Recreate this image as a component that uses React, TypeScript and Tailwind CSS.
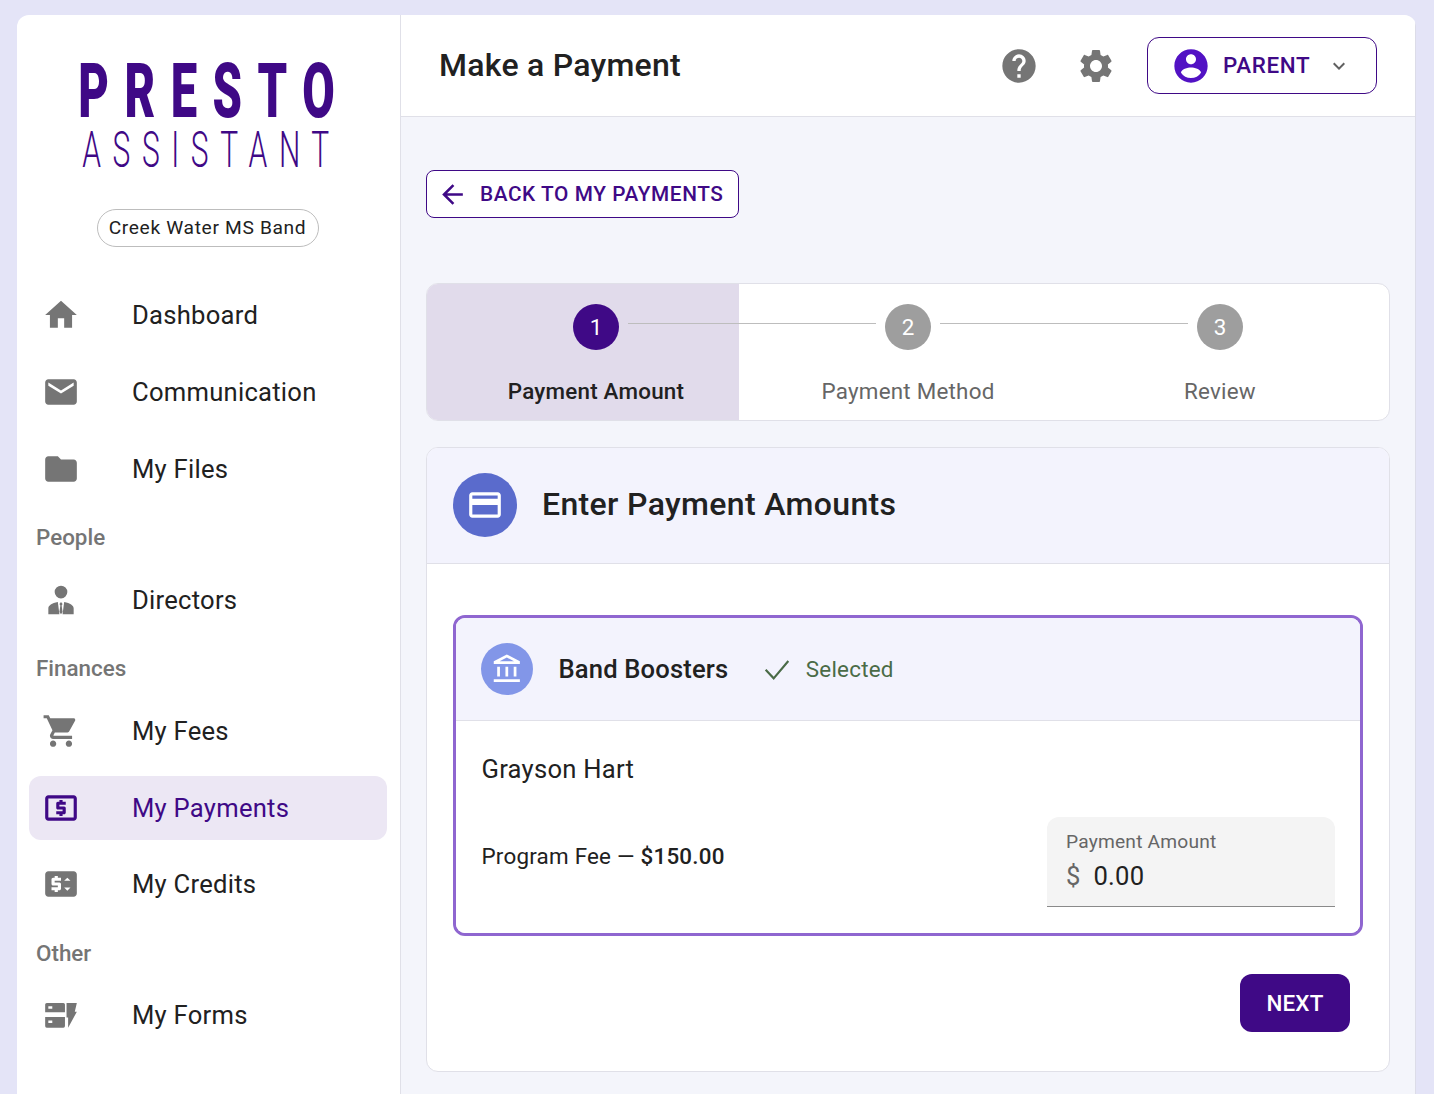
import type { ReactNode } from "react";

const ICONS = {
  home: "M10 20v-6h4v6h5v-8h3L12 3 2 12h3v8z",
  mail: "M20 4H4c-1.1 0-1.99.9-1.99 2L2 18c0 1.1.9 2 2 2h16c1.1 0 2-.9 2-2V6c0-1.1-.9-2-2-2zm0 4l-8 5-8-5V6l8 5 8-5v2z",
  folder: "M10 4H4c-1.1 0-1.99.9-1.99 2L2 18c0 1.1.9 2 2 2h16c1.1 0 2-.9 2-2V8c0-1.1-.9-2-2-2h-8l-2-2z",
  director: "M12 3a4 4 0 110 8 4 4 0 010-8zM4 21v-3.600c0-2 2.200-3.300 6-4.100l1 7.700H4zm16 0v-3.600c0-2-2.200-3.300-6-4.100l-1 7.700h7zM12 13.300l1 1.200-.6 1 .6 4-1 1.500-1-1.500.6-4-.6-1z",
  cart: "M7 18c-1.1 0-1.99.9-1.99 2S5.9 22 7 22s2-.9 2-2-.9-2-2-2zM1 2v2h2l3.6 7.59-1.35 2.45c-.16.28-.25.61-.25.96 0 1.1.9 2 2 2h12v-2H7.42c-.14 0-.25-.11-.25-.25l.03-.12.9-1.63h7.45c.75 0 1.41-.41 1.75-1.03l3.58-6.49c.08-.14.12-.31.12-.48 0-.55-.45-1-1-1H5.21l-.94-2H1zm16 16c-1.1 0-1.99.9-1.99 2s.89 2 1.99 2 2-.9 2-2-.9-2-2-2z",
  atm: "M11 17h2v-1h1c.55 0 1-.45 1-1v-3c0-.55-.45-1-1-1h-3v-1h4V8h-2V7h-2v1h-1c-.55 0-1 .45-1 1v3c0 .55.45 1 1 1h3v1H9v2h2v1zm9-13H4c-1.11 0-1.99.89-1.99 2L2 18c0 1.11.89 2 2 2h16c1.11 0 2-.89 2-2V6c0-1.11-.89-2-2-2zm0 14H4V6h16v12z",
  price: "M20 4H4c-1.11 0-1.99.89-1.99 2L2 18c0 1.11.89 2 2 2h16c1.11 0 2-.89 2-2V6c0-1.11-.89-2-2-2zm-8 6H8v1h3c.55 0 1 .45 1 1v3c0 .55-.45 1-1 1h-1v1H8v-1H6v-2h4v-1H7c-.55 0-1-.45-1-1V9c0-.55.45-1 1-1h1V7h2v1h2v2zm4 6.25l-2-2h4l-2 2zM14 10l2-2 2 2h-4z",
  forms: "M3 4.400h10.500a1 1 0 011 1v4.800H2V5.400a1 1 0 011-1zM4 6.500V8h2.500V6.500H4zM2 13.300h12.500V19a1 1 0 01-1 1H3a1 1 0 01-1-1v-5.700zm2 2.200V17h2.500v-1.500H4zM15.500 4.400H22l-1.300 5.600H22l-5.500 10v-6.500h-1z",
  help: "M12 2C6.48 2 2 6.48 2 12s4.48 10 10 10 10-4.48 10-10S17.52 2 12 2zm1 17h-2v-2h2v2zm2.07-7.75l-.9.92C13.45 12.9 13 13.5 13 15h-2v-.5c0-1.1.45-2.1 1.17-2.83l1.24-1.26c.37-.36.59-.86.59-1.41 0-1.1-.9-2-2-2s-2 .9-2 2H8c0-2.21 1.79-4 4-4s4 1.79 4 4c0 .88-.36 1.68-.93 2.25z",
  settings: "M19.14 12.94c.04-.3.06-.61.06-.94 0-.32-.02-.64-.07-.94l2.03-1.58c.18-.14.23-.41.12-.61l-1.92-3.32c-.12-.22-.37-.29-.59-.22l-2.39.96c-.5-.38-1.03-.7-1.62-.94l-.36-2.54c-.04-.24-.24-.41-.48-.41h-3.84c-.24 0-.43.17-.47.41l-.36 2.54c-.59.24-1.13.57-1.62.94l-2.39-.96c-.22-.08-.47 0-.59.22L2.74 8.87c-.12.21-.08.47.12.61l2.03 1.58c-.05.3-.09.63-.09.94s.02.64.07.94l-2.03 1.58c-.18.14-.23.41-.12.61l1.92 3.32c.12.22.37.29.59.22l2.39-.96c.5.38 1.03.7 1.62.94l.36 2.54c.05.24.24.41.48.41h3.84c.24 0 .44-.17.47-.41l.36-2.54c.59-.24 1.13-.56 1.62-.94l2.39.96c.22.08.47 0 .59-.22l1.92-3.32c.12-.22.07-.47-.12-.61l-2.01-1.58zM12 15.6c-1.98 0-3.6-1.62-3.6-3.6s1.62-3.6 3.6-3.6 3.6 1.62 3.6 3.6-1.62 3.6-3.6 3.6z",
  account: "M12 2C6.48 2 2 6.48 2 12s4.48 10 10 10 10-4.48 10-10S17.52 2 12 2zm0 3c1.66 0 3 1.34 3 3s-1.34 3-3 3-3-1.34-3-3 1.34-3 3-3zm0 14.2c-2.5 0-4.71-1.28-6-3.22.03-1.99 4-3.08 6-3.08 1.99 0 5.97 1.09 6 3.08-1.29 1.94-3.5 3.22-6 3.22z",
  expand: "M16.59 8.59L12 13.17 7.41 8.59 6 10l6 6 6-6z",
  back: "M20 11H7.83l5.59-5.59L12 4l-8 8 8 8 1.41-1.41L7.83 13H20v-2z",
  card: "M20 4H4c-1.11 0-1.99.89-1.99 2L2 18c0 1.11.89 2 2 2h16c1.11 0 2-.89 2-2V6c0-1.11-.89-2-2-2zm0 14H4v-6h16v6zm0-10H4V6h16v2z",
  bank: "M6.500 10h-2v7h2v-7zm6 0h-2v7h2v-7zm8.500 9H2v2h19v-2zm-2.500-9h-2v7h2v-7zm-7-6.740L16.710 6H6.290l5.210-2.740m0-2.260L2 6v2h19V6l-9.500-5z",
};

function Icon({ d, className }: { d: string; className: string }) {
  return (
    <svg viewBox="0 0 24 24" fill="currentColor" className={className} aria-hidden>
      <path d={d} fillRule="evenodd" />
    </svg>
  );
}

function NavItem({ icon, label, active }: { icon: string; label: string; active?: boolean }) {
  return (
    <div
      className={
        "flex h-16 items-center gap-[52px] rounded-xl pl-[13px] " +
        (active ? "bg-[#ece7f4] text-[#3f0986]" : "text-[#212121]")
      }
    >
      <Icon d={icon} className={"h-[38px] w-[38px] shrink-0 " + (active ? "text-[#3f0986]" : "text-[#757575]")} />
      <span className="text-[25.6px] tracking-[0.01em]">{label}</span>
    </div>
  );
}

function NavLabel({ children, className = "mb-[19px] mt-[24px]" }: { children: ReactNode; className?: string }) {
  return (
    <div className={"h-6 pl-[7px] text-[22.4px] font-medium leading-6 text-[#757575] " + className}>
      {children}
    </div>
  );
}

function Logo() {
  return (
    <div className="flex flex-col items-center text-[#3f0986]">
      <div className="flex h-[62px] w-[260px] justify-center">
        <div className="w-max shrink-0 origin-center translate-x-[6px] scale-x-[0.62] whitespace-nowrap text-[76px] font-black leading-[62px] tracking-[25px]">
          PRESTO
        </div>
      </div>
      <div className="mt-[5px] flex h-[46px] w-[260px] justify-center">
        <div className="w-max shrink-0 origin-center translate-x-[3px] scale-x-[0.6] whitespace-nowrap text-[50px] font-light leading-[46px] tracking-[19.300px]">
          ASSISTANT
        </div>
      </div>
    </div>
  );
}

function Sidebar() {
  return (
    <aside className="w-[384px] shrink-0 border-r border-[#e0e0e8] bg-white">
      <div className="pt-[45px]">
        <Logo />
      </div>
      <div className="mt-[36px] flex justify-center">
        <div className="flex h-[38px] w-[222px] translate-x-[-1px] items-center justify-center rounded-full border border-[#bdbdbd] text-[19.2px] tracking-[0.034em] text-[#212121]">
          Creek Water MS Band
        </div>
      </div>
      <nav className="mt-[36px] pl-[12px] pr-[13px]">
        <div className="flex flex-col gap-[13px]">
          <NavItem icon={ICONS.home} label="Dashboard" />
          <NavItem icon={ICONS.mail} label="Communication" />
          <NavItem icon={ICONS.folder} label="My Files" />
        </div>
        <NavLabel>People</NavLabel>
        <NavItem icon={ICONS.director} label="Directors" />
        <NavLabel>Finances</NavLabel>
        <div className="flex flex-col">
          <NavItem icon={ICONS.cart} label="My Fees" />
          <div className="mb-[12px] mt-[13px]">
            <NavItem icon={ICONS.atm} label="My Payments" active />
          </div>
          <NavItem icon={ICONS.price} label="My Credits" />
        </div>
        <NavLabel className="mb-[18px] mt-[25px]">Other</NavLabel>
        <NavItem icon={ICONS.forms} label="My Forms" />
      </nav>
    </aside>
  );
}

function Header() {
  return (
    <header className="flex h-[102px] items-center border-b border-[#e0e0e8] bg-white pl-[38px] pr-[38px]">
      <h1 className="mb-[2px] text-[32px] font-medium tracking-[0.008em] text-[#212121]">Make a Payment</h1>
      <div className="ml-auto flex items-center">
        <Icon d={ICONS.help} className="h-[40px] w-[40px] text-[#757575]" />
        <Icon d={ICONS.settings} className="ml-[37px] h-[40px] w-[40px] text-[#757575]" />
        <button
          type="button"
          className="ml-[31px] flex h-[57px] w-[230px] items-center rounded-xl border border-[#3f0986] pl-[23px] text-[#3f0986]"
        >
          <Icon d={ICONS.account} className="h-[40px] w-[40px] text-[#5212c4]" />
          <span className="ml-[12px] text-[22.4px] font-medium tracking-[0.028em]">PARENT</span>
          <Icon d={ICONS.expand} className="ml-[17px] h-[24px] w-[24px] text-[#616161]" />
        </button>
      </div>
    </header>
  );
}

function Step({ n, label, active, line }: { n: number; label: string; active?: boolean; line?: boolean }) {
  return (
    <div className={"relative flex w-[312px] flex-col items-center pl-[26px] pt-[20px] " + (active ? "bg-[#e1dbeb]" : "")}>
      {line && <div className="absolute left-[201px] top-[39px] h-px w-[248px] bg-[#bdbdbd]" />}
      <div
        className={
          "flex h-[46px] w-[46px] items-center justify-center rounded-full pt-px text-[22.4px] text-white " +
          (active ? "bg-[#3f0986]" : "bg-[#9e9e9e]")
        }
      >
        {n}
      </div>
      <div
        className={
          "mt-[25px] text-[22.4px] tracking-[0.01em] " +
          (active ? "font-medium text-[#212121]" : "text-[#666666]")
        }
      >
        {label}
      </div>
    </div>
  );
}

function Stepper() {
  return (
    <div className="mt-[65px] flex h-[138px] overflow-hidden rounded-xl border border-[#e0e0e8] bg-white">
      <Step n={1} label="Payment Amount" active line />
      <Step n={2} label="Payment Method" line />
      <Step n={3} label="Review" />
    </div>
  );
}

function BoosterCard() {
  return (
    <div className="overflow-hidden rounded-xl border-[3px] border-[#8f66d0]">
      <div className="flex h-[103px] items-center border-b border-[#e0e0e8] bg-[#f3f3fd] pl-[25px]">
        <div className="flex h-[52px] w-[52px] items-center justify-center rounded-full bg-[#8296e8]">
          <Icon d={ICONS.bank} className="h-[33px] w-[33px] text-white" />
        </div>
        <span className="ml-[25.500px] text-[25.6px] font-medium tracking-[0.006em] text-[#212121]">Band Boosters</span>
        <svg viewBox="0 0 24 24" fill="none" stroke="#4a6b47" strokeWidth="1.6" className="ml-[32.500px] h-[32px] w-[32px]" aria-hidden>
          <path d="M3.500 12.500l6 6.500L20.500 6" />
        </svg>
        <span className="ml-[13px] pt-[2px] text-[22.4px] tracking-[0.01em] text-[#4a6b47]">Selected</span>
      </div>
      <div className="bg-white pb-[26px] pl-[25.500px] pr-[25px] pt-[29px]">
        <div className="text-[25.6px] tracking-[0.01em] text-[#212121]">Grayson Hart</div>
        <div className="mt-[29px] flex items-center justify-between">
          <div className="mb-[12px] text-[22.4px] tracking-[0.01em] text-[#212121]">
            Program Fee — <span className="font-medium">$150.00</span>
          </div>
          <div className="h-[90px] w-[288px] rounded-t-xl border-b border-[#8a8a8a] bg-[#f4f4f4] pl-[19px] pt-[11px]">
            <div className="text-[19.2px] tracking-[0.01em] text-[#666666]">Payment Amount</div>
            <div className="flex items-center text-[25.6px] text-[#212121]">
              <span className="text-[#666666]">$</span>
              <span className="ml-[13px] tracking-[0.01em]">0.00</span>
            </div>
          </div>
        </div>
      </div>
    </div>
  );
}

export default function App() {
  return (
    <div className="h-[1094px] overflow-hidden bg-[#e4e4f7] pl-[17px] pr-[18px] pt-[15px] font-['Roboto',sans-serif]">
      <div className="flex h-[1100px] overflow-hidden rounded-t-xl">
        <Sidebar />
        <main className="flex-1 border-r border-[#dcdce8] bg-[#f4f5fb]">
          <Header />
          <div className="px-[25px] pt-[53px]">
            <button
              type="button"
              className="flex h-[48px] w-[313px] items-center rounded-lg border border-[#3f0986] bg-white pl-[10px] text-[#3f0986]"
            >
              <Icon d={ICONS.back} className="h-[31px] w-[31px]" />
              <span className="ml-[12px] pt-px text-[20.8px] font-medium tracking-[0.028em]">BACK TO MY PAYMENTS</span>
            </button>
            <Stepper />
            <section className="mt-[26px] h-[625px] overflow-hidden rounded-xl border border-[#e0e0e8] bg-white">
              <div className="flex h-[116px] items-center border-b border-[#e0e0e8] bg-[#f3f3fd] pb-[2px] pl-[26px]">
                <div className="flex h-[64px] w-[64px] items-center justify-center rounded-full bg-[#5a6bcc]">
                  <Icon d={ICONS.card} className="h-[38px] w-[38px] text-white" />
                </div>
                <h2 className="mb-[2px] ml-[25px] text-[32px] font-medium tracking-[0.011em] text-[#212121]">Enter Payment Amounts</h2>
              </div>
              <div className="px-[26px] pt-[51px]">
                <BoosterCard />
                <div className="mt-[38px] flex justify-end pr-[13px]">
                  <button
                    type="button"
                    className="h-[58px] w-[110px] rounded-xl bg-[#3f0986] text-[22.4px] font-medium tracking-[0.01em] text-white"
                  >
                    NEXT
                  </button>
                </div>
              </div>
            </section>
          </div>
        </main>
      </div>
    </div>
  );
}
